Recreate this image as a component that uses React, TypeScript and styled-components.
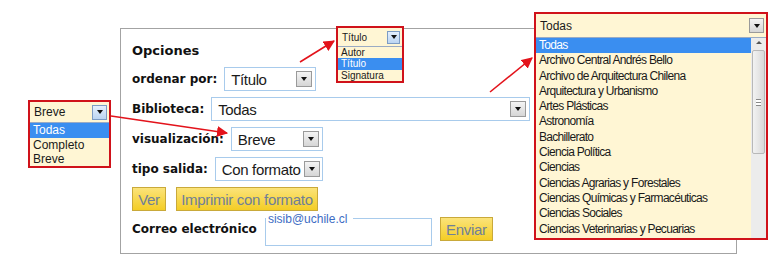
import React from 'react'
import styled, { createGlobalStyle, css } from 'styled-components'

const GlobalStyle = createGlobalStyle`
  html, body {
    margin: 0;
    padding: 0;
    background: #ffffff;
  }
`

const Canvas = styled.div`
  position: relative;
  width: 773px;
  height: 261px;
  overflow: hidden;
  background: #ffffff;
`

const Panel = styled.section`
  box-sizing: border-box;
  margin: 28px 0 0 120px;
  width: 617px;
  height: 226px;
  border: 1px solid #a3a3a3;
  padding: 11px 0 0 11px;
  display: flex;
  flex-direction: column;
  gap: 6px;
`

const Title = styled.h2`
  margin: 0;
  height: 21px;
  line-height: 21px;
  font-family: 'DejaVu Sans', Verdana, sans-serif;
  font-size: 13px;
  font-weight: bold;
  color: #111111;
`

const Row = styled.div<{ $gap?: number }>`
  display: flex;
  align-items: center;
  height: 24px;
  gap: ${p => p.$gap ?? 7}px;
`

const Label = styled.span`
  font-family: 'DejaVu Sans', Verdana, sans-serif;
  font-size: 12px;
  font-weight: bold;
  color: #111111;
  white-space: nowrap;
`

const SelectBox = styled.div<{ $w: number }>`
  box-sizing: border-box;
  width: ${p => p.$w}px;
  height: 24px;
  border: 1px solid #a8cbec;
  background: #ffffff;
  display: flex;
  align-items: center;
  justify-content: space-between;
  gap: 3px;
  padding: 0 3px 0 6px;
  font-family: 'Liberation Sans', Arial, sans-serif;
  font-size: 15px;
  letter-spacing: -0.35px;
  color: #1a1a1a;
  white-space: nowrap;
`

const DropButton = styled.span<{ $size?: number; $tint?: boolean }>`
  box-sizing: border-box;
  width: ${p => p.$size ?? 16}px;
  height: ${p => p.$size ?? 16}px;
  border: 1px solid ${p => (p.$tint ? '#7d9cc4' : '#9a9a9a')};
  background: ${p => (p.$tint ? 'linear-gradient(#e4effc, #bcd5f2)' : 'linear-gradient(#f4f4f4, #d6d6d6)')};
  display: flex;
  align-items: center;
  justify-content: center;
  flex: none;

  &::after {
    content: '';
    border-left: 3px solid transparent;
    border-right: 3px solid transparent;
    border-top: 4px solid #111111;
  }
`

const YellowButton = styled.button<{ $w: number }>`
  box-sizing: border-box;
  width: ${p => p.$w}px;
  height: 24px;
  padding: 0;
  border: 1px solid #c9a93a;
  background: linear-gradient(#fbe37a, #f4cd25);
  color: #6f7f98;
  font-family: 'Liberation Sans', Arial, sans-serif;
  font-size: 15px;
  letter-spacing: -0.3px;
  white-space: nowrap;
  cursor: pointer;
`

const EmailField = styled.fieldset`
  box-sizing: border-box;
  margin: 0;
  padding: 0;
  width: 167px;
  height: 33px;
  border: 1px solid #a8cbec;
`

const EmailLegend = styled.legend`
  margin: 0;
  padding: 0 6px 0 2px;
  font-family: 'Liberation Sans', Arial, sans-serif;
  font-size: 12px;
  line-height: 12px;
  color: #3d6cc4;
`

/* annotation popups, laid over the form */

const PopupFrame = styled.div<{ $x: number; $y: number; $w: number; $h: number }>`
  position: absolute;
  left: ${p => p.$x}px;
  top: ${p => p.$y}px;
  width: ${p => p.$w}px;
  height: ${p => p.$h}px;
  box-sizing: border-box;
  border: 2px solid #d0121a;
  background: #fff6d4;
  display: flex;
  flex-direction: column;
  overflow: hidden;
`

const PopupHead = styled.div<{ $h: number; $fs: number }>`
  box-sizing: border-box;
  height: ${p => p.$h}px;
  display: flex;
  align-items: center;
  justify-content: space-between;
  padding: 0 2px 0 4px;
  border-bottom: 1px solid #9aabc4;
  font-family: 'Liberation Sans', Arial, sans-serif;
  font-size: ${p => p.$fs}px;
  color: #1a1a1a;
  flex: none;
`

const PopupBody = styled.div`
  display: flex;
  flex: 1;
  min-height: 0;
`

const PopupList = styled.ul`
  list-style: none;
  margin: 0;
  padding: 0;
  flex: 1;
`

const PopupItem = styled.li<{ $h: number; $fs: number; $active?: boolean; $ls?: number }>`
  height: ${p => p.$h}px;
  line-height: ${p => p.$h}px;
  padding-left: 3px;
  font-family: 'Liberation Sans', Arial, sans-serif;
  font-size: ${p => p.$fs}px;
  letter-spacing: ${p => p.$ls ?? 0}px;
  color: #1a1a1a;
  white-space: nowrap;
  ${p =>
    p.$active &&
    css`
      background: #3a8ef0;
      color: #ffffff;
    `}
`

const ScrollTrack = styled.div`
  width: 15px;
  flex: none;
  background: #ececec;
  display: flex;
  flex-direction: column;
  align-items: center;
  padding-top: 3px;
  gap: 6px;
`

const ScrollArrow = styled.span`
  border-left: 3px solid transparent;
  border-right: 3px solid transparent;
  border-bottom: 3px solid #555555;
`

const ScrollThumb = styled.div`
  box-sizing: border-box;
  width: 13px;
  height: 104px;
  border: 1px solid #b8b8b8;
  border-radius: 2px;
  background: linear-gradient(90deg, #f2f2f2, #d9d9d9);
  display: flex;
  align-items: center;
  justify-content: center;

  &::after {
    content: '';
    width: 5px;
    height: 5px;
    border-top: 1px solid #888;
    border-bottom: 1px solid #888;
    background: linear-gradient(#fff 0 40%, #888 40% 60%, #fff 60%);
  }
`

const Arrows = styled.svg`
  position: absolute;
  left: 0;
  top: 0;
  pointer-events: none;
`

type PopupProps = {
  x: number
  y: number
  w: number
  h: number
  value: string
  items: string[]
  active: number
  headH: number
  rowH: number
  fs: number
  ls?: number
  btn?: number
  tint?: boolean
  scroll?: boolean
}

const Popup = ({ x, y, w, h, value, items, active, headH, rowH, fs, ls, btn, tint, scroll }: PopupProps) => (
  <PopupFrame $x={x} $y={y} $w={w} $h={h}>
    <PopupHead $h={headH} $fs={fs}>
      <span>{value}</span>
      <DropButton $size={btn} $tint={tint} />
    </PopupHead>
    <PopupBody>
      <PopupList>
        {items.map((it, i) => (
          <PopupItem key={it + i} $h={rowH} $fs={fs} $ls={ls} $active={i === active}>
            {it}
          </PopupItem>
        ))}
      </PopupList>
      {scroll && (
        <ScrollTrack>
          <ScrollArrow />
          <ScrollThumb />
        </ScrollTrack>
      )}
    </PopupBody>
  </PopupFrame>
)

const bibliotecas = [
  'Todas',
  'Archivo Central Andrés Bello',
  'Archivo de Arquitectura Chilena',
  'Arquitectura y Urbanismo',
  'Artes Plásticas',
  'Astronomía',
  'Bachillerato',
  'Ciencia Política',
  'Ciencias',
  'Ciencias Agrarias y Forestales',
  'Ciencias Químicas y Farmacéuticas',
  'Ciencias Sociales',
  'Ciencias Veterinarias y Pecuarias'
]

const App = () => {
  return (
    <Canvas>
      <GlobalStyle />
      <Panel>
        <Title>Opciones</Title>
        <Row>
          <Label>ordenar por:</Label>
          <SelectBox $w={92}>
            Título
            <DropButton />
          </SelectBox>
        </Row>
        <Row>
          <Label>Biblioteca:</Label>
          <SelectBox $w={319}>
            Todas
            <DropButton />
          </SelectBox>
        </Row>
        <Row>
          <Label>visualización:</Label>
          <SelectBox $w={92}>
            Breve
            <DropButton />
          </SelectBox>
        </Row>
        <Row>
          <Label>tipo salida:</Label>
          <SelectBox $w={108}>
            Con formato
            <DropButton />
          </SelectBox>
        </Row>
        <Row $gap={10}>
          <YellowButton $w={34}>Ver</YellowButton>
          <YellowButton $w={142}>Imprimir con formato</YellowButton>
        </Row>
        <Row $gap={8}>
          <Label>Correo electrónico</Label>
          <EmailField>
            <EmailLegend>sisib@uchile.cl</EmailLegend>
          </EmailField>
          <YellowButton $w={53}>Enviar</YellowButton>
        </Row>
      </Panel>

      <Popup
        x={28}
        y={100}
        w={83}
        h={68}
        value="Breve"
        items={['Todas', 'Completo', 'Breve']}
        active={0}
        headH={21}
        rowH={14.5}
        fs={12}
        btn={15}
        tint
      />
      <Popup
        x={336}
        y={26}
        w={68}
        h={57}
        value="Título"
        items={['Autor', 'Título', 'Signatura']}
        active={1}
        headH={19}
        rowH={11.3}
        fs={10}
        btn={13}
        tint
      />
      <Popup
        x={534}
        y={12}
        w={234}
        h={228}
        value="Todas"
        items={bibliotecas}
        active={0}
        headH={24}
        rowH={15.3}
        fs={12}
        ls={-0.7}
        btn={15}
        scroll
      />

      <Arrows width={773} height={261}>
        <defs>
          <marker id="head" viewBox="0 0 10 10" refX="9" refY="5" markerWidth="7" markerHeight="7" orient="auto">
            <path d="M0 0 L10 5 L0 10 z" fill="#e3131b" />
          </marker>
        </defs>
        <g stroke="#e3131b" strokeWidth="1.6" fill="none">
          <line x1="300" y1="62" x2="334" y2="41" markerEnd="url(#head)" />
          <line x1="111" y1="116" x2="227" y2="133" markerEnd="url(#head)" />
          <line x1="490" y1="92" x2="532" y2="58" markerEnd="url(#head)" />
        </g>
      </Arrows>
    </Canvas>
  )
}

export default App
